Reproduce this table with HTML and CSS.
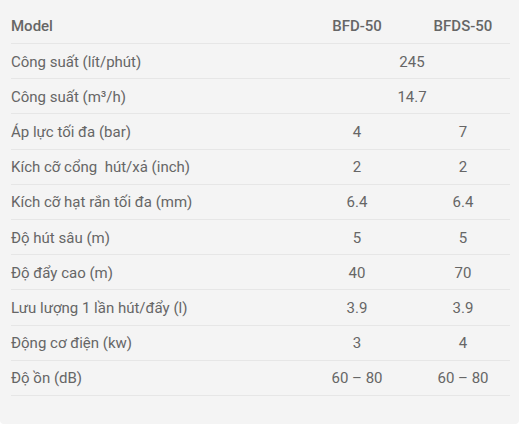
FILE: index.html
```html
<!DOCTYPE html>
<html lang="vi">
<head>
<meta charset="utf-8">
<link rel="stylesheet" href="styles.css">
</head>
<body>
<div class="panel">
  <table class="specs">
    <colgroup>
      <col class="c-label">
      <col class="c-a">
      <col class="c-b">
    </colgroup>
    <thead>
      <tr class="head">
        <th class="label">Model</th>
        <th class="va">BFD-50</th>
        <th class="vb">BFDS-50</th>
      </tr>
    </thead>
    <tbody>
      <tr><td class="label">Công suất (lít/phút)</td><td class="vspan" colspan="2">245</td></tr>
      <tr><td class="label">Công suất (m³/h)</td><td class="vspan" colspan="2">14.7</td></tr>
      <tr><td class="label">Áp lực tối đa (bar)</td><td class="va">4</td><td class="vb">7</td></tr>
      <tr><td class="label">Kích cỡ cổng&nbsp; hút/xả (inch)</td><td class="va">2</td><td class="vb">2</td></tr>
      <tr><td class="label">Kích cỡ hạt rắn tối đa (mm)</td><td class="va">6.4</td><td class="vb">6.4</td></tr>
      <tr><td class="label">Độ hút sâu (m)</td><td class="va">5</td><td class="vb">5</td></tr>
      <tr><td class="label">Độ đẩy cao (m)</td><td class="va">40</td><td class="vb">70</td></tr>
      <tr><td class="label">Lưu lượng 1 lần hút/đẩy (l)</td><td class="va">3.9</td><td class="vb">3.9</td></tr>
      <tr><td class="label">Động cơ điện (kw)</td><td class="va">3</td><td class="vb">4</td></tr>
      <tr><td class="label">Độ ồn (dB)</td><td class="va">60 – 80</td><td class="vb">60 – 80</td></tr>
    </tbody>
  </table>
</div>
</body>
</html>
```

FILE: styles.css
```css
html, body {
  margin: 0;
  padding: 0;
  background: #ffffff;
}

.panel {
  box-sizing: border-box;
  width: 519px;
  height: 424px;
  background: #f4f4f4;
  border-radius: 0 0 4px 4px;
  padding: 8px 9px 0 11px;
  font-family: Roboto, "Noto Sans", sans-serif;
  font-size: 15px;
  color: #666666;
}

.specs {
  width: 499px;
  table-layout: fixed;
  border-collapse: collapse;
  border-spacing: 0;
}

.c-label { width: 295px; }
.c-a { width: 102px; }
.c-b { width: 102px; }

.specs th,
.specs td {
  padding: 1px 0 0 0;
  height: 33.2px;
  border-bottom: 1px solid #e6e6e6;
  vertical-align: middle;
  white-space: nowrap;
  line-height: 18px;
}

.specs .head th {
  height: 34px;
  font-weight: 500;
}

.label {
  text-align: left;
}

.va {
  text-align: center;
}

.vb,
.vspan {
  text-align: center;
  padding-left: 8px !important;
}
```
